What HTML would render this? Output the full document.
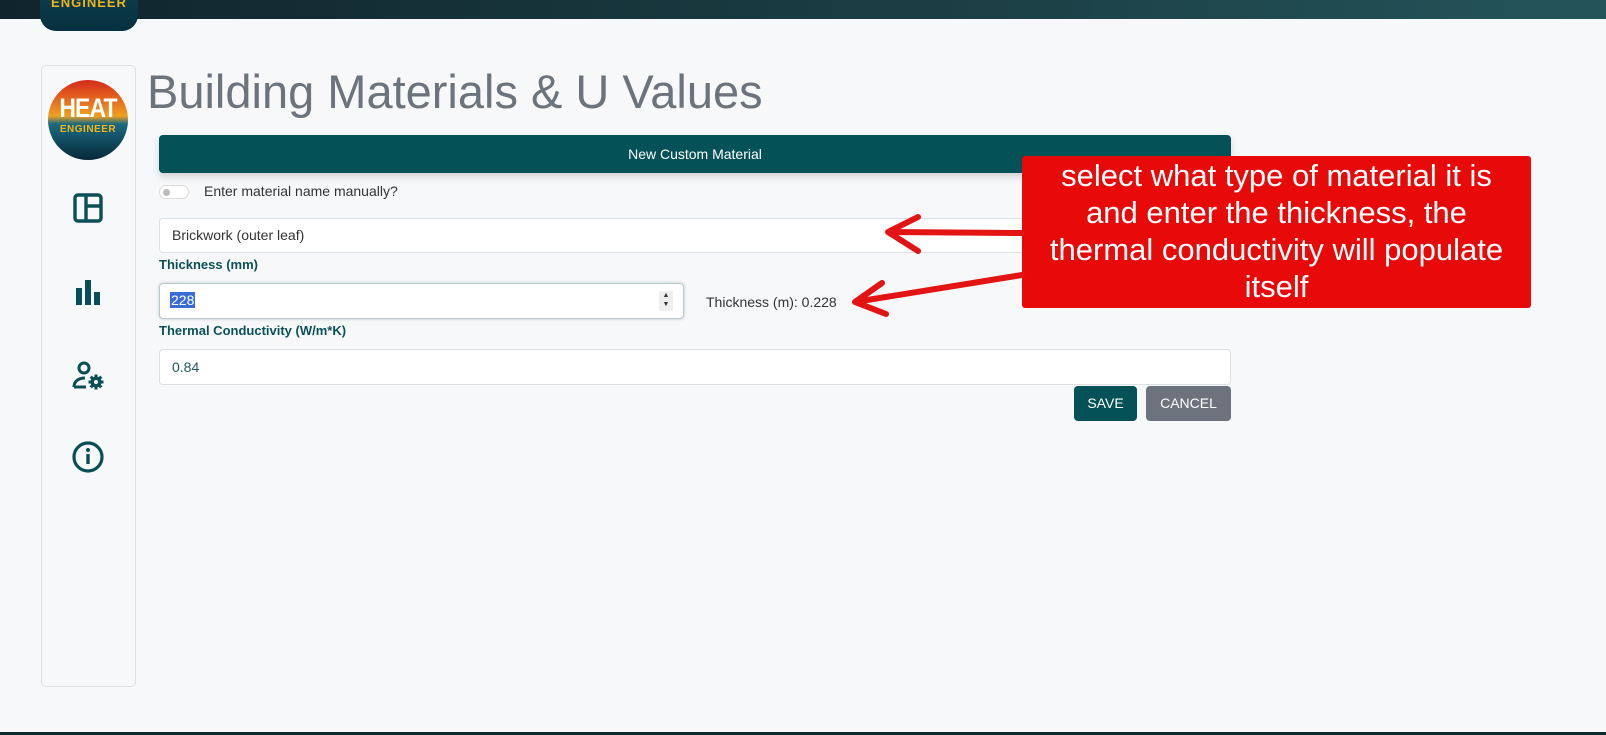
<!DOCTYPE html>
<html><head><meta charset="utf-8"><style>
*{box-sizing:border-box;margin:0;padding:0}
body{width:1606px;height:735px;background:#f7f8fa;font-family:"Liberation Sans",sans-serif;position:relative;overflow:hidden}
.topbar{position:absolute;left:0;top:0;width:1606px;height:19px;background:linear-gradient(90deg,#10242b,#1b3f45 60%,#24555a)}
.bottombar{position:absolute;left:0;top:732px;width:1606px;height:3px;background:#10282e}
.tab{position:absolute;left:40px;top:0;width:98px;height:31px;background:linear-gradient(#0c3a48,#053040);border-radius:0 0 16px 16px;overflow:hidden;text-align:center;color:#f1b51c;font-weight:bold;font-size:13px;line-height:8px;letter-spacing:1px}
.side{position:absolute;left:41px;top:65px;width:95px;height:622px;border:1px solid #dde0e4;border-radius:5px;background:#f7f8fa}
.logo{position:absolute;left:48px;top:80px;width:80px;height:80px;border-radius:50%;background:linear-gradient(#d42a1c 0%,#f0a020 45%,#1a6a80 55%,#06283a 100%);text-align:center;overflow:hidden}
.logo .h{color:#fff;font-weight:bold;font-size:27px;margin-top:13px;letter-spacing:-1px;transform:scaleX(.85)}
.logo .e{color:#f3b41a;font-weight:bold;font-size:10px;letter-spacing:.5px}
.ic{position:absolute;left:70px}
h1{position:absolute;left:147px;top:64px;font-weight:normal;font-size:47px;color:#6b737c}
.btn{position:absolute;left:159px;top:135px;width:1072px;height:38px;background:#045158;border-radius:4px;color:#fff;font-size:14px;text-align:center;line-height:38px;box-shadow:0 4px 8px rgba(0,0,0,.15)}
.tog{position:absolute;left:159px;top:185px;width:30px;height:14px;border:1px solid #dcdcdc;border-radius:7px;background:#fff}
.tog:after{content:"";position:absolute;left:3px;top:3px;width:7px;height:7px;border-radius:50%;background:#bbb}
.t{position:absolute;font-size:14px;color:#333}
.inp{position:absolute;background:#fff;border:1px solid #dcdfe3;border-radius:4px;font-size:14px;padding-left:12px}
.lbl{position:absolute;left:159px;font-size:13px;font-weight:bold;color:#0c5057}
.red{position:absolute;left:1022px;top:156px;width:509px;height:152px;background:#e80909;border-radius:3px;color:#fff;font-size:31px;text-align:center;line-height:37px;padding-top:1px;white-space:nowrap}
.sb{position:absolute;top:386px;height:35px;border-radius:4px;color:#fff;font-size:14px;line-height:35px;text-align:center}
</style></head><body>
<div class="topbar"></div>
<div class="tab"><div style="margin-top:-1px">ENGINEER</div></div>
<div class="side"></div>
<div class="logo"><div class="h">HEAT</div><div class="e">ENGINEER</div></div>
<svg class="ic" style="top:190px" width="36" height="36" viewBox="0 0 36 36"><rect x="5" y="5" width="26" height="26" rx="3" fill="none" stroke="#0b4f56" stroke-width="3.4"/><path d="M16 5V31M16 16H31" stroke="#0b4f56" stroke-width="3.4"/></svg>
<svg class="ic" style="top:274px" width="36" height="36" viewBox="0 0 36 36"><rect x="6" y="14" width="6" height="17" fill="#0b4f56"/><rect x="15" y="6" width="6" height="25" fill="#0b4f56"/><rect x="24" y="18" width="6" height="13" fill="#0b4f56"/></svg>
<svg class="ic" style="top:358px" width="36" height="36" viewBox="0 0 36 36"><circle cx="14" cy="10" r="5" fill="none" stroke="#0b4f56" stroke-width="3"/><path d="M4 29c0-6 5-9 11-9" fill="none" stroke="#0b4f56" stroke-width="3"/><path d="M4 29h12" stroke="#0b4f56" stroke-width="3"/><g fill="#0b4f56"><circle cx="26" cy="24" r="5.5"/><rect x="24.5" y="16.5" width="3" height="15"/><rect x="18.5" y="22.5" width="15" height="3"/><rect x="24.5" y="16.5" width="3" height="15" transform="rotate(45 26 24)"/><rect x="24.5" y="16.5" width="3" height="15" transform="rotate(-45 26 24)"/></g><circle cx="26" cy="24" r="2" fill="#f7f8fa"/></svg>
<svg class="ic" style="top:439px" width="36" height="36" viewBox="0 0 36 36"><circle cx="18" cy="18" r="14" fill="none" stroke="#0b4f56" stroke-width="3.2"/><rect x="16.3" y="15" width="3.4" height="10" fill="#0b4f56"/><circle cx="18" cy="11" r="2" fill="#0b4f56"/></svg>
<h1>Building Materials &amp; U Values</h1>
<div class="btn">New Custom Material</div>
<div class="tog"></div>
<div class="t" style="left:204px;top:183px">Enter material name manually?</div>
<div class="inp" style="left:159px;top:218px;width:1072px;height:35px;line-height:33px;color:#333">Brickwork (outer leaf)</div>
<div class="lbl" style="top:257px">Thickness (mm)</div>
<div class="inp" style="left:159px;top:283px;width:525px;height:36px;border:1.5px solid #b9c9cc;box-shadow:0 0 3px rgba(0,80,90,.25);padding-left:10px"><span style="position:absolute;left:10px;top:8px;background:#3a6bd6;color:#fff;padding:0 1px">228</span><span style="position:absolute;right:10px;top:7px;width:14px;height:20px;background:#eee;font-size:7px;line-height:9px;text-align:center;color:#333">▲<br>▼</span></div>
<div class="t" style="left:706px;top:294px">Thickness (m): 0.228</div>
<div class="lbl" style="top:323px">Thermal Conductivity (W/m*K)</div>
<div class="inp" style="left:159px;top:349px;width:1072px;height:36px;line-height:34px;color:#1d5a5f">0.84</div>
<div class="sb" style="left:1074px;width:63px;background:#045158">SAVE</div>
<div class="sb" style="left:1146px;width:85px;background:#6c737c">CANCEL</div>
<div class="red">select what type of material it is<br>and enter the thickness, the<br>thermal conductivity will populate<br>itself</div>
<svg style="position:absolute;left:0;top:0" width="1606" height="735"><g stroke="#e21414" stroke-width="6" fill="none" stroke-linecap="round" stroke-linejoin="round"><path d="M1022 233L888 232M918 217L888 232L918 251"/><path d="M1022 275L855 302M882 283L855 302L886 314"/></g></svg>
<div class="bottombar"></div>
</body></html>
